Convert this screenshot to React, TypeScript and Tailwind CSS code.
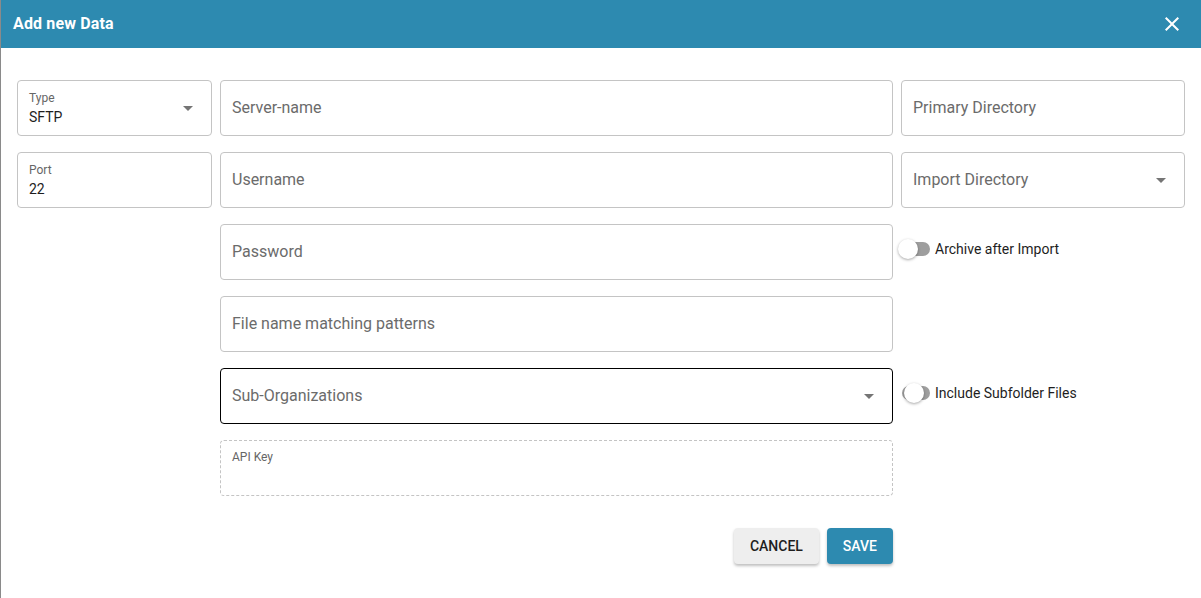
import { X } from "lucide-react"

const font = { fontFamily: "Roboto, 'Liberation Sans', sans-serif" }

function Caret() {
  return (
    <svg width="10" height="5" viewBox="0 0 10 5" className="shrink-0">
      <path d="M0 0 L5 5 L10 0 Z" fill="#757575" />
    </svg>
  )
}

function Field({
  placeholder,
  label,
  value,
  select,
  focused,
}: {
  placeholder?: string
  label?: string
  value?: string
  select?: boolean
  focused?: boolean
}) {
  return (
    <div
      className={`flex h-[56px] items-center rounded-[4px] border bg-white pl-[11px] pr-[18px] ${
        focused ? "border-black" : "border-[#c4c4c4]"
      }`}
    >
      <div className="flex-1">
        {label ? (
          <div className="flex flex-col">
            <span className="text-[12px] leading-[14px] text-[#666666]">{label}</span>
            <span className="mt-[4px] text-[14px] leading-[16px] text-[#1e1e1e]">{value}</span>
          </div>
        ) : (
          <span className="text-[16px] text-[#6b6b6b]">{placeholder}</span>
        )}
      </div>
      {select && <Caret />}
    </div>
  )
}

function Toggle({ label, mid }: { label: string; mid?: boolean }) {
  return (
    <div className="flex h-[56px] items-center pb-[6px]">
      <div className="relative ml-[-3px] h-[20px] w-[34px]">
        <div className="absolute left-[4px] right-[2px] top-[3px] h-[14px] rounded-full bg-[#9e9e9e]" />
        <div
          className={`absolute top-0 h-[20px] w-[20px] rounded-full bg-white shadow-[0_1px_3px_rgba(0,0,0,0.35)] ${
            mid ? "left-[6px]" : "left-0"
          }`}
        />
      </div>
      <span className="ml-[3px] text-[14px] text-[#1e1e1e]">{label}</span>
    </div>
  )
}

export default function App() {
  return (
    <div style={font} className="h-[598px] w-[1201px] overflow-hidden border-l border-[#8a8a8a] bg-white">
      <div className="flex h-[48px] items-center justify-between bg-[#2d8ab0] pl-[12px] pr-[17px]">
        <h1 className="text-[16px] font-bold tracking-[0.15px] text-white">Add new Data</h1>
        <svg width="24" height="24" viewBox="0 0 24 24" fill="white">
          <path d="M19 6.41 17.59 5 12 10.59 6.41 5 5 6.41 10.59 12 5 17.59 6.41 19 12 13.41 17.59 19 19 17.59 13.41 12z" />
        </svg>
      </div>

      <div className="pl-[16px] pt-[32px]">
        <div className="grid grid-cols-[195px_673px_284px] gap-x-[8px] gap-y-[16px]">
          <Field label="Type" value="SFTP" select />
          <Field placeholder="Server-name" />
          <Field placeholder="Primary Directory" />

          <Field label="Port" value="22" />
          <Field placeholder="Username" />
          <Field placeholder="Import Directory" select />

          <div />
          <Field placeholder="Password" />
          <Toggle label="Archive after Import" />

          <div />
          <Field placeholder="File name matching patterns" />
          <div />

          <div />
          <Field placeholder="Sub-Organizations" select focused />
          <Toggle label="Include Subfolder Files" mid />

          <div />
          <div className="h-[56px] rounded-[4px] border border-dashed border-[#c4c4c4] pl-[11px] pt-[3px]">
            <span className="text-[12px] leading-[14px] text-[#666666]">API Key</span>
          </div>
          <div />
        </div>

        <div className="mt-[32px] flex w-[876px] justify-end gap-[8px]">
          <button className="h-[36px] rounded-[4px] bg-[#eeeeee] px-[16px] text-[14px] font-medium text-[#1e1e1e] shadow-[0_2px_3px_rgba(0,0,0,0.25)]">
            CANCEL
          </button>
          <button className="h-[36px] rounded-[4px] bg-[#2d8ab0] px-[16px] text-[14px] font-medium text-white shadow-[0_2px_3px_rgba(0,0,0,0.25)]">
            SAVE
          </button>
        </div>
      </div>
    </div>
  )
}
